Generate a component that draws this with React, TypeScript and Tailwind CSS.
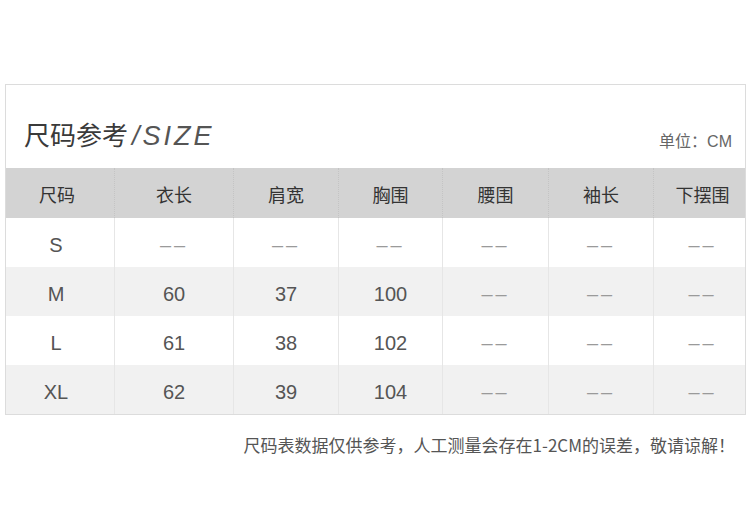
import React from "react";

const cols = ["尺码", "衣长", "肩宽", "胸围", "腰围", "袖长", "下摆围"];
const rows = [
  ["S", "--", "--", "--", "--", "--", "--"],
  ["M", "60", "37", "100", "--", "--", "--"],
  ["L", "61", "38", "102", "--", "--", "--"],
  ["XL", "62", "39", "104", "--", "--", "--"],
];

const gridCls = "grid grid-cols-[108px_119px_105px_104px_106px_105px_1fr]";

export default function App() {
  return (
    <div
      className="w-[750px] h-[528px] bg-white overflow-hidden"
      style={{ fontFamily: '"Liberation Sans", "Noto Sans CJK SC", sans-serif' }}
    >
      <div className="ml-[5px] mt-[84px] w-[741px] border border-[#dcdcdc]">
        <div className="h-[83px] flex items-end justify-between pl-[18px] pr-[13px] pb-[17px]">
          <div className="flex items-baseline text-[26px] leading-[30px] text-[#3a3a3a]">
            <span style={{ fontFamily: '"Noto Sans CJK SC", sans-serif' }}>尺码参考</span>
            <span className="italic text-[27px] text-[#555] ml-[4px] tracking-[3px]">/SIZE</span>
          </div>
          <div className="text-[16px] leading-[20px] text-[#666] mb-[-1px]">
            <span style={{ fontFamily: '"Noto Sans CJK SC", sans-serif' }}>单位：</span>
            <span className="ml-[0px]">CM</span>
          </div>
        </div>
        <div className={`${gridCls} h-[50px] bg-[#d3d3d3]`}>
          {cols.map((c, i) => (
            <div
              key={c}
              className={`flex items-center justify-center pt-[3px] text-[18px] text-[#333] ${i > 0 ? "border-l border-dotted border-[#c4c4c4]" : ""} ${i === 6 ? "pl-[6px]" : ""} ${i === 0 ? "pr-[6px]" : ""}`}
              style={{ fontFamily: '"Noto Sans CJK SC", sans-serif' }}
            >
              {c}
            </div>
          ))}
        </div>
        {rows.map((r, ri) => (
          <div key={ri} className={`${gridCls} h-[49px] ${ri % 2 === 1 ? "bg-[#f1f1f1]" : "bg-white"}`}>
            {r.map((v, i) => (
              <div
                key={i}
                className={`flex items-center justify-center pt-[5px] text-[20px] ${v === "--" ? "text-[#9a9a9a] tracking-[3px]" : "text-[#555]"} ${i > 0 ? "border-l border-[#e6e6e6]" : ""} ${i === 0 ? "pr-[8px]" : ""} ${i === 6 ? "pl-[6px]" : ""}`}
              >
                {v === "--" ? "––" : v}
              </div>
            ))}
          </div>
        ))}
      </div>
      <div
        className="mt-[20px] pr-[15px] text-right text-[17px] leading-[20px] text-[#555]"
        style={{ fontFamily: '"Noto Sans CJK SC", sans-serif' }}
      >
        尺码表数据仅供参考，人工测量会存在1-2CM的误差，敬请谅解！
      </div>
    </div>
  );
}
